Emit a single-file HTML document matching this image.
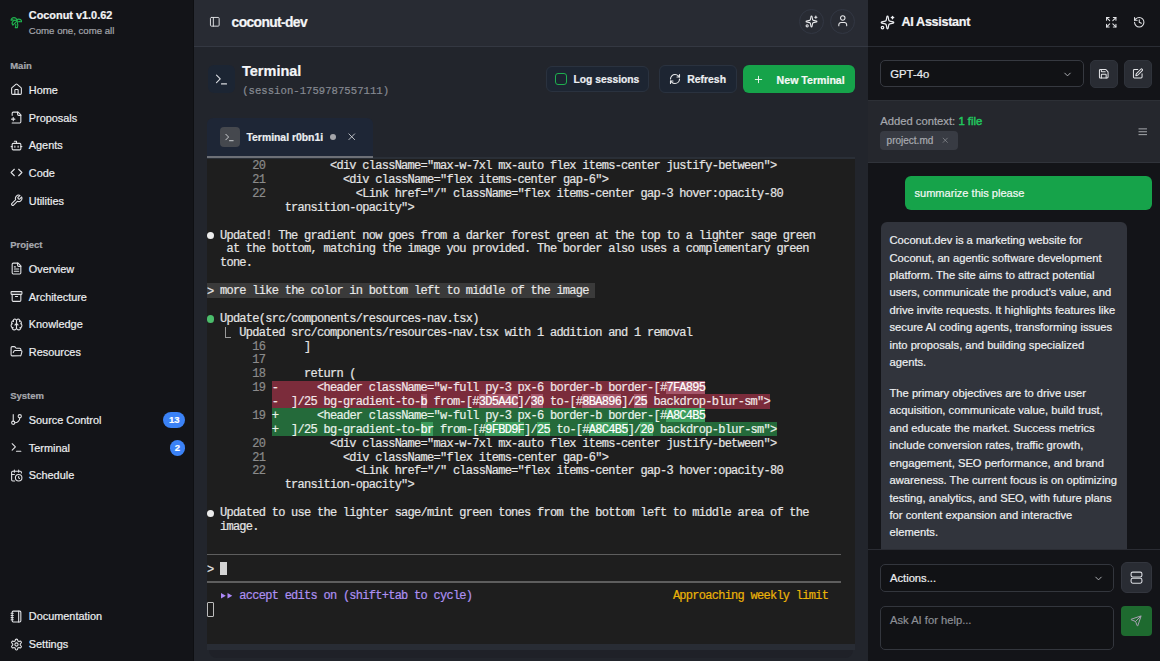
<!DOCTYPE html>
<html><head><meta charset="utf-8">
<style>
*{box-sizing:border-box;margin:0;padding:0}
html,body{width:1160px;height:661px;overflow:hidden;background:#141519;font-family:"Liberation Sans",sans-serif;color:#e8e9eb}
.a,.nl,.sl,.tr{-webkit-text-stroke:0.2px currentColor}
.a{position:absolute}
svg.i{position:absolute;fill:none;stroke:currentColor;stroke-linecap:round;stroke-linejoin:round}
#side{left:0;top:0;width:194px;height:661px;background:#131418;border-right:1px solid #0e0f12}
.nl{position:absolute;left:28.8px;font-size:10.9px;line-height:14px;height:14px;color:#eceef0;white-space:nowrap}
.sl{position:absolute;left:10.2px;font-size:9.5px;font-weight:bold;line-height:12px;height:12px;color:#a6a8ae;margin-top:0.6px}
.ni{color:#e2e3e6}
.badge{position:absolute;background:#3b82f6;color:#fff;font-weight:bold;font-size:9.5px;text-align:center;line-height:16px;height:16px;border-radius:8px}
#main{left:194px;top:0;width:674px;height:661px;background:#22252c}
#mhead{left:194px;top:0;width:674px;height:47px;background:#282b33;border-bottom:1px solid #343842}
#right{left:868px;top:0;width:292px;height:661px;background:#131418}
.tr{position:absolute;left:0;height:13.87px;line-height:13.87px;white-space:pre;font-family:"Liberation Mono",monospace;font-size:12px;letter-spacing:-0.731px;color:#e4e4e4}
.ln{color:#8b8b8b}
.gt{position:relative;top:1.2px}
.usr{color:#e6e6e6}
.rd{color:#f2e6e8}
.rh{color:#fff}
.gd{color:#e8f2ea}
.gh{color:#fff}
.pu{color:#ad90f2}
.ye{color:#eab308}
.chat{font-size:11.2px;line-height:17.43px;color:#eef0f2;white-space:nowrap}
</style></head><body>
<!-- SIDEBAR -->
<div id="side" class="a">
  <svg class="i" style="left:9.7px;top:15.9px;width:12.7px;height:12.7px;color:#20b24e" viewBox="0 0 24 24" stroke-width="2.1"><path d="M13 8c0-2.760-2.460-5-5.500-5S2 5.240 2 8h2l1-1 1 1h4"/><path d="M13 7.140A5.820 5.820 0 0 1 16.500 6c3.040 0 5.500 2.240 5.500 5h-3l-1-1-1 1h-3"/><path d="M5.890 9.710c-2.150 2.150-2.300 5.470-.350 7.430l4.240-4.250.700-.700.710-.710 2.120-2.120c-1.950-1.960-5.270-1.800-7.420.350"/><path d="M11 15.500c.500 2.500-.170 4.500-1 6.500h4c2-5.500-.500-12-1-14"/></svg>
  <div class="a" style="left:28.8px;top:8px;font-size:10.9px;font-weight:bold;line-height:14px;color:#f3f4f6;white-space:nowrap">Coconut v1.0.62</div>
  <div class="a" style="left:28.8px;top:23.7px;font-size:9.65px;line-height:13px;color:#a4a6ac;white-space:nowrap">Come one, come all</div>

  <div class="sl" style="top:59.7px">Main</div>
  <svg class="i ni" style="left:9.8px;top:83.25px;width:13px;height:13px" viewBox="0 0 24 24" stroke-width="2"><path d="M15 21v-8a1 1 0 0 0-1-1h-4a1 1 0 0 0-1 1v8"/><path d="M3 10a2 2 0 0 1 .709-1.528l7-5.999a2 2 0 0 1 2.582 0l7 5.999A2 2 0 0 1 21 10v9a2 2 0 0 1-2 2H5a2 2 0 0 1-2-2z"/></svg>
  <div class="nl" style="top:83px">Home</div>
  <svg class="i ni" style="left:9.8px;top:110.95px;width:13px;height:13px" viewBox="0 0 24 24" stroke-width="2"><path d="M4 22h14a2 2 0 0 0 2-2V7l-5-5H6a2 2 0 0 0-2 2v4"/><path d="M14 2v4a2 2 0 0 0 2 2h4"/><path d="M3 15h6"/><path d="M6 12v6"/></svg>
  <div class="nl" style="top:110.7px">Proposals</div>
  <svg class="i ni" style="left:9.8px;top:138.65px;width:13px;height:13px" viewBox="0 0 24 24" stroke-width="2"><path d="M12 8V4H8"/><rect width="16" height="12" x="4" y="8" rx="2"/><path d="M2 14h2"/><path d="M20 14h2"/><path d="M15 13v2"/><path d="M9 13v2"/></svg>
  <div class="nl" style="top:138.4px">Agents</div>
  <svg class="i ni" style="left:9.8px;top:166.35px;width:13px;height:13px" viewBox="0 0 24 24" stroke-width="2"><polyline points="16 18 22 12 16 6"/><polyline points="8 6 2 12 8 18"/></svg>
  <div class="nl" style="top:166.1px">Code</div>
  <svg class="i ni" style="left:9.8px;top:194.05px;width:13px;height:13px" viewBox="0 0 24 24" stroke-width="2"><path d="M14.7 6.3a1 1 0 0 0 0 1.4l1.6 1.6a1 1 0 0 0 1.4 0l3.77-3.77a6 6 0 0 1-7.94 7.94l-6.91 6.91a2.12 2.12 0 0 1-3-3l6.910-6.910a6 6 0 0 1 7.940-7.940l-3.760 3.760z"/></svg>
  <div class="nl" style="top:193.8px">Utilities</div>

  <div class="sl" style="top:238.6px">Project</div>
  <svg class="i ni" style="left:9.8px;top:262.25px;width:13px;height:13px" viewBox="0 0 24 24" stroke-width="2"><path d="M15 2H6a2 2 0 0 0-2 2v16a2 2 0 0 0 2 2h12a2 2 0 0 0 2-2V7Z"/><path d="M14 2v4a2 2 0 0 0 2 2h4"/><path d="M10 9H8"/><path d="M16 13H8"/><path d="M16 17H8"/></svg>
  <div class="nl" style="top:261.8px">Overview</div>
  <svg class="i ni" style="left:9.8px;top:289.95px;width:13px;height:13px" viewBox="0 0 24 24" stroke-width="2"><rect width="20" height="5" x="2" y="3" rx="1"/><path d="M4 8v11a2 2 0 0 0 2 2h12a2 2 0 0 0 2-2V8"/><path d="M10 12h4"/></svg>
  <div class="nl" style="top:289.5px">Architecture</div>
  <svg class="i ni" style="left:9.8px;top:317.65px;width:13px;height:13px" viewBox="0 0 24 24" stroke-width="2"><path d="M12 5a3 3 0 1 0-5.997.125 4 4 0 0 0-2.526 5.77 4 4 0 0 0 .556 6.588A4 4 0 1 0 12 18Z"/><path d="M12 5a3 3 0 1 1 5.997.125 4 4 0 0 1 2.526 5.77 4 4 0 0 1-.556 6.588A4 4 0 1 1 12 18Z"/><path d="M15 13a4.5 4.5 0 0 1-3-4 4.5 4.5 0 0 1-3 4"/><path d="M17.599 6.5a3 3 0 0 0 .399-1.375"/><path d="M6.003 5.125A3 3 0 0 0 6.401 6.5"/><path d="M3.477 10.896a4 4 0 0 1 .585-.396"/><path d="M19.938 10.5a4 4 0 0 1 .585.396"/><path d="M6 18a4 4 0 0 1-1.967-.516"/><path d="M19.967 17.484A4 4 0 0 1 18 18"/></svg>
  <div class="nl" style="top:317.2px">Knowledge</div>
  <svg class="i ni" style="left:9.8px;top:345.35px;width:13px;height:13px" viewBox="0 0 24 24" stroke-width="2"><path d="m6 14 1.5-2.9A2 2 0 0 1 9.24 10H20a2 2 0 0 1 1.94 2.5l-1.54 6a2 2 0 0 1-1.95 1.5H4a2 2 0 0 1-2-2V5a2 2 0 0 1 2-2h3.9a2 2 0 0 1 1.69.9l.81 1.2a2 2 0 0 0 1.67.9H18a2 2 0 0 1 2 2v2"/></svg>
  <div class="nl" style="top:344.9px">Resources</div>

  <div class="sl" style="top:389.4px">System</div>
  <svg class="i ni" style="left:9.8px;top:413.45px;width:13px;height:13px" viewBox="0 0 24 24" stroke-width="2"><line x1="6" x2="6" y1="3" y2="15"/><circle cx="18" cy="6" r="3"/><circle cx="6" cy="18" r="3"/><path d="M18 9a9 9 0 0 1-9 9"/></svg>
  <div class="nl" style="top:413px">Source Control</div>
  <div class="badge" style="left:163.2px;top:412px;width:22px">13</div>
  <svg class="i ni" style="left:9.8px;top:441.15px;width:13px;height:13px" viewBox="0 0 24 24" stroke-width="2"><polyline points="4 17 10 11 4 5"/><line x1="12" x2="20" y1="19" y2="19"/></svg>
  <div class="nl" style="top:440.7px">Terminal</div>
  <div class="badge" style="left:169.5px;top:440px;width:15.6px;height:15.6px;line-height:15.6px">2</div>
  <svg class="i ni" style="left:9.8px;top:468.85px;width:13px;height:13px" viewBox="0 0 24 24" stroke-width="2"><path d="M21 7.5V6a2 2 0 0 0-2-2H5a2 2 0 0 0-2 2v14a2 2 0 0 0 2 2h3.5"/><path d="M16 2v4"/><path d="M8 2v4"/><path d="M3 10h5"/><path d="M17.5 17.5 16 16.3V14"/><circle cx="16" cy="16" r="6"/></svg>
  <div class="nl" style="top:468.4px">Schedule</div>

  <svg class="i ni" style="left:9.8px;top:609.85px;width:13px;height:13px" viewBox="0 0 24 24" stroke-width="2"><path d="M2 6h4"/><path d="M2 10h4"/><path d="M2 14h4"/><path d="M2 18h4"/><rect width="16" height="20" x="4" y="2" rx="2"/><path d="M16 2v20"/></svg>
  <div class="nl" style="top:609.4px">Documentation</div>
  <svg class="i ni" style="left:9.8px;top:637.85px;width:13px;height:13px" viewBox="0 0 24 24" stroke-width="2"><path d="M12.22 2h-.44a2 2 0 0 0-2 2v.18a2 2 0 0 1-1 1.73l-.43.25a2 2 0 0 1-2 0l-.15-.08a2 2 0 0 0-2.73.73l-.22.38a2 2 0 0 0 .73 2.73l.15.1a2 2 0 0 1 1 1.72v.51a2 2 0 0 1-1 1.74l-.15.09a2 2 0 0 0-.73 2.73l.22.38a2 2 0 0 0 2.73.73l.15-.08a2 2 0 0 1 2 0l.43.25a2 2 0 0 1 1 1.73V20a2 2 0 0 0 2 2h.44a2 2 0 0 0 2-2v-.18a2 2 0 0 1 1-1.73l.43-.25a2 2 0 0 1 2 0l.15.08a2 2 0 0 0 2.73-.73l.22-.39a2 2 0 0 0-.73-2.730l-.15-.08a2 2 0 0 1-1-1.740v-.5a2 2 0 0 1 1-1.740l.15-.09a2 2 0 0 0 .73-2.730l-.22-.38a2 2 0 0 0-2.730-.73l-.15.08a2 2 0 0 1-2 0l-.43-.25a2 2 0 0 1-1-1.730V4a2 2 0 0 0-2-2z"/><circle cx="12" cy="12" r="3"/></svg>
  <div class="nl" style="top:637.4px">Settings</div>
</div>

<!-- MAIN -->
<div id="main" class="a"></div>
<div id="mhead" class="a"></div>
<svg class="i" style="left:209.2px;top:16.2px;width:11.6px;height:11.6px;color:#dfe0e3" viewBox="0 0 24 24" stroke-width="2"><rect width="18" height="18" x="3" y="3" rx="2"/><path d="M9 3v18"/></svg>
<div class="a" style="left:231.6px;top:15.4px;font-size:13.8px;letter-spacing:-0.6px;font-weight:bold;line-height:16px;color:#f4f5f7;white-space:nowrap">coconut-dev</div>
<div class="a" style="left:799px;top:9px;width:25px;height:25px;border-radius:50%;border:1px solid #323743"></div>
<svg class="i" style="left:805px;top:15.2px;width:13px;height:13px;color:#e8e9eb" viewBox="0 0 24 24" stroke-width="2"><path d="M11.017 2.814a1 1 0 0 1 1.966 0l1.051 5.558a2 2 0 0 0 1.594 1.594l5.558 1.051a1 1 0 0 1 0 1.966l-5.558 1.051a2 2 0 0 0-1.594 1.594l-1.051 5.558a1 1 0 0 1-1.966 0l-1.051-5.558a2 2 0 0 0-1.594-1.594l-5.558-1.051a1 1 0 0 1 0-1.966l5.558-1.051a2 2 0 0 0 1.594-1.594z"/><path d="M20 2v4"/><path d="M22 4h-4"/><circle cx="4" cy="20" r="2"/></svg>
<div class="a" style="left:830px;top:9px;width:25px;height:25px;border-radius:50%;border:1px solid #323743"></div>
<svg class="i" style="left:835.9px;top:13.9px;width:13.5px;height:13.5px;color:#e8e9eb" viewBox="0 0 24 24" stroke-width="1.9"><path d="M19 21v-2a4 4 0 0 0-4-4H9a4 4 0 0 0-4 4v2"/><circle cx="12" cy="7" r="4"/></svg>

<div class="a" style="left:207.5px;top:65.3px;width:27.5px;height:27.5px;border-radius:6px;background:#1c2533"></div>
<svg class="i" style="left:213.6px;top:71.6px;width:15px;height:15px;color:#d9dbe0" viewBox="0 0 24 24" stroke-width="1.8"><polyline points="4 17 10 11 4 5"/><line x1="12" x2="20" y1="19" y2="19"/></svg>
<div class="a" style="left:242px;top:61.5px;font-size:14.5px;font-weight:bold;line-height:18px;color:#f4f5f7;white-space:nowrap">Terminal</div>
<div class="a" style="left:242.2px;top:83.5px;font-family:'Liberation Mono',monospace;font-size:10.65px;line-height:14px;color:#868a92;white-space:nowrap">(session-1759787557111)</div>

<div class="a" style="left:545.5px;top:66px;width:103.5px;height:26.4px;border-radius:6px;background:#1d2532;border:1px solid #2a323f"></div>
<div class="a" style="left:555px;top:73.2px;width:12.2px;height:12.2px;border-radius:3px;border:1px solid #1fae4f;background:#1b2430"></div>
<div class="a" style="left:573.5px;top:73px;font-size:10.3px;font-weight:bold;line-height:14px;color:#eceef1;white-space:nowrap">Log sessions</div>
<div class="a" style="left:658.6px;top:65.3px;width:78px;height:27.5px;border-radius:6px;background:#1d2532;border:1px solid #2a323f"></div>
<svg class="i" style="left:668.9px;top:73.4px;width:12px;height:12px;color:#e8e9eb" viewBox="0 0 24 24" stroke-width="2.2"><path d="M3 12a9 9 0 0 1 9-9 9.75 9.75 0 0 1 6.74 2.74L21 8"/><path d="M21 3v5h-5"/><path d="M21 12a9 9 0 0 1-9 9 9.75 9.75 0 0 1-6.74-2.74L3 16"/><path d="M8 16H3v5"/></svg>
<div class="a" style="left:687.3px;top:73px;font-size:10.4px;font-weight:bold;line-height:14px;color:#eceef1;white-space:nowrap">Refresh</div>
<div class="a" style="left:742.7px;top:65.3px;width:112px;height:27.5px;border-radius:6px;background:#16a34a"></div>
<svg class="i" style="left:752.6px;top:73.6px;width:11px;height:11px;color:#f2f7f3" viewBox="0 0 24 24" stroke-width="2"><path d="M5 12h14"/><path d="M12 5v14"/></svg>
<div class="a" style="left:776.6px;top:73px;font-size:10.6px;font-weight:bold;line-height:14px;color:#f4f8f5;white-space:nowrap">New Terminal</div>

<div class="a" style="left:207.4px;top:117.8px;width:165.6px;height:40px;border-radius:6px 6px 0 0;background:#1e2636"></div>
<div class="a" style="left:207px;top:157.3px;width:648px;height:1.7px;background:#2a2f37"></div>
<div class="a" style="left:207.4px;top:156px;width:165.6px;height:2px;background:#6d7077"></div>
<div class="a" style="left:219.9px;top:127px;width:19.7px;height:20px;border-radius:4px;background:#45484e"></div>
<svg class="i" style="left:224.2px;top:131.6px;width:11px;height:11px;color:#dfe1e4" viewBox="0 0 24 24" stroke-width="1.9"><polyline points="4 17 10 11 4 5"/><line x1="12" x2="20" y1="19" y2="19"/></svg>
<div class="a" style="left:246.5px;top:131px;font-size:10.4px;font-weight:bold;line-height:14px;color:#eceef1;white-space:nowrap">Terminal r0bn1i</div>
<div class="a" style="left:329.6px;top:133.7px;width:6.6px;height:6.6px;border-radius:50%;background:#a4a5aa"></div>
<svg class="i" style="left:345.6px;top:131.4px;width:11.5px;height:11.5px;color:#d5d7db" viewBox="0 0 24 24" stroke-width="1.8"><path d="M18 6 6 18"/><path d="m6 6 12 12"/></svg>

<div class="a" style="left:207px;top:159px;width:648px;height:484.7px;background:#1e1e1e"></div>
<div class="a" style="left:207px;top:643.7px;width:648px;height:6.3px;background:#282c34"></div>
<div class="a" style="left:209px;top:650px;width:644px;height:7.5px;background:#1f2128;border-radius:0 0 10px 10px"></div>
<div id="term" class="a" style="left:207px;top:158.5px;width:648px;height:484px;overflow:hidden">
<div class="tr" style="top:1.6px">       <span class="ln">20</span>          &lt;div className="max-w-7xl mx-auto flex items-center justify-between"&gt;</div>
<div class="tr" style="top:15.48px">       <span class="ln">21</span>            &lt;div className="flex items-center gap-6"&gt;</div>
<div class="tr" style="top:29.36px">       <span class="ln">22</span>              &lt;Link href="/" className="flex items-center gap-3 hover:opacity-80</div>
<div class="tr" style="top:43.24px">            transition-opacity"&gt;</div>
<div class="tr" style="top:71.0px">  Updated! The gradient now goes from a darker forest green at the top to a lighter sage green</div>
<div class="tr" style="top:84.88px">   at the bottom, matching the image you provided. The border also uses a complementary green</div>
<div class="tr" style="top:98.76px">  tone.</div>
<div class="a" style="left:0.0px;top:124.92px;width:6.77px;height:14.180000000000001px;background:#3a3a3a"></div>
<div class="a" style="left:6.47px;top:124.92px;width:382.03px;height:14.180000000000001px;background:#3a3a3a"></div>
<div class="tr" style="top:126.52px"><span class="gt usr">&gt;</span><span class="usr"> more like the color in bottom left to middle of the image </span></div>
<div class="tr" style="top:154.28px">  Update(src/components/resources-nav.tsx)</div>
<div class="tr" style="top:168.16px">     Updated src/components/resources-nav.tsx with 1 addition and 1 removal</div>
<div class="tr" style="top:182.04px">       <span class="ln">16</span>      ]</div>
<div class="tr" style="top:195.92px">       <span class="ln">17</span></div>
<div class="tr" style="top:209.8px">       <span class="ln">18</span>      return (</div>
<div class="a" style="left:64.7px;top:222.08px;width:394.97px;height:14.180000000000001px;background:#7b2c3b"></div>
<div class="a" style="left:459.37px;top:222.08px;width:39.12px;height:14.180000000000001px;background:#a5566a"></div>
<div class="tr" style="top:223.68px">       <span class="ln">19</span> <span class="rd">-      &lt;header className="w-full py-3 px-6 border-b border-[#</span><span class="rh">7FA895</span></div>
<div class="a" style="left:64.7px;top:235.96px;width:149.11px;height:14.180000000000001px;background:#7b2c3b"></div>
<div class="a" style="left:213.51px;top:235.96px;width:6.77px;height:14.180000000000001px;background:#a5566a"></div>
<div class="a" style="left:219.98px;top:235.96px;width:52.06px;height:14.180000000000001px;background:#7b2c3b"></div>
<div class="a" style="left:271.74px;top:235.96px;width:39.12px;height:14.180000000000001px;background:#a5566a"></div>
<div class="a" style="left:310.56px;top:235.96px;width:13.24px;height:14.180000000000001px;background:#7b2c3b"></div>
<div class="a" style="left:323.5px;top:235.96px;width:13.24px;height:14.180000000000001px;background:#a5566a"></div>
<div class="a" style="left:336.44px;top:235.96px;width:39.12px;height:14.180000000000001px;background:#7b2c3b"></div>
<div class="a" style="left:375.26px;top:235.96px;width:39.12px;height:14.180000000000001px;background:#a5566a"></div>
<div class="a" style="left:414.08px;top:235.96px;width:13.24px;height:14.180000000000001px;background:#7b2c3b"></div>
<div class="a" style="left:427.02px;top:235.96px;width:13.24px;height:14.180000000000001px;background:#a5566a"></div>
<div class="a" style="left:439.96px;top:235.96px;width:123.23px;height:14.180000000000001px;background:#7b2c3b"></div>
<div class="tr" style="top:237.56px">          <span class="rd">-  ]/25 bg-gradient-to-</span><span class="rh">b</span><span class="rd"> from-[#</span><span class="rh">3D5A4C</span><span class="rd">]/</span><span class="rh">30</span><span class="rd"> to-[#</span><span class="rh">8BA896</span><span class="rd">]/</span><span class="rh">25</span><span class="rd"> backdrop-blur-sm"&gt;</span></div>
<div class="a" style="left:64.7px;top:249.84px;width:394.97px;height:14.180000000000001px;background:#246a3a"></div>
<div class="a" style="left:459.37px;top:249.84px;width:39.12px;height:14.180000000000001px;background:#3c9d5d"></div>
<div class="tr" style="top:251.44px">       <span class="ln">19</span> <span class="gd">+      &lt;header className="w-full py-3 px-6 border-b border-[#</span><span class="gh">A8C4B5</span></div>
<div class="a" style="left:64.7px;top:263.72px;width:149.11px;height:14.180000000000001px;background:#246a3a"></div>
<div class="a" style="left:213.51px;top:263.72px;width:13.24px;height:14.180000000000001px;background:#3c9d5d"></div>
<div class="a" style="left:226.45px;top:263.72px;width:52.06px;height:14.180000000000001px;background:#246a3a"></div>
<div class="a" style="left:278.21px;top:263.72px;width:39.12px;height:14.180000000000001px;background:#3c9d5d"></div>
<div class="a" style="left:317.03px;top:263.72px;width:13.24px;height:14.180000000000001px;background:#246a3a"></div>
<div class="a" style="left:329.97px;top:263.72px;width:13.24px;height:14.180000000000001px;background:#3c9d5d"></div>
<div class="a" style="left:342.91px;top:263.72px;width:39.12px;height:14.180000000000001px;background:#246a3a"></div>
<div class="a" style="left:381.73px;top:263.72px;width:39.12px;height:14.180000000000001px;background:#3c9d5d"></div>
<div class="a" style="left:420.55px;top:263.72px;width:13.24px;height:14.180000000000001px;background:#246a3a"></div>
<div class="a" style="left:433.49px;top:263.72px;width:13.24px;height:14.180000000000001px;background:#3c9d5d"></div>
<div class="a" style="left:446.43px;top:263.72px;width:123.23px;height:14.180000000000001px;background:#246a3a"></div>
<div class="tr" style="top:265.32px">          <span class="gd">+  ]/25 bg-gradient-to-</span><span class="gh">br</span><span class="gd"> from-[#</span><span class="gh">9FBD9F</span><span class="gd">]/</span><span class="gh">25</span><span class="gd"> to-[#</span><span class="gh">A8C4B5</span><span class="gd">]/</span><span class="gh">20</span><span class="gd"> backdrop-blur-sm"&gt;</span></div>
<div class="tr" style="top:279.2px">       <span class="ln">20</span>          &lt;div className="max-w-7xl mx-auto flex items-center justify-between"&gt;</div>
<div class="tr" style="top:293.08px">       <span class="ln">21</span>            &lt;div className="flex items-center gap-6"&gt;</div>
<div class="tr" style="top:306.96px">       <span class="ln">22</span>              &lt;Link href="/" className="flex items-center gap-3 hover:opacity-80</div>
<div class="tr" style="top:320.84px">            transition-opacity"&gt;</div>
<div class="tr" style="top:348.6px">  Updated to use the lighter sage/mint green tones from the bottom left to middle area of the</div>
<div class="tr" style="top:362.48px">  image.</div>
<div class="tr" style="top:404.12px"><span class="gt">&gt;</span> </div>
<div class="tr" style="top:431.88px">    <span class="pu"> accept edits on (shift+tab to cycle)</span>                               <span class="ye">Approaching weekly limit</span></div>
<div class="a" style="left:-0.1px;top:73.7px;width:7.3px;height:7.3px;border-radius:50%;background:#ececec"></div>
<div class="a" style="left:-0.1px;top:156.98px;width:7.3px;height:7.3px;border-radius:50%;background:#4bbd6b"></div>
<div class="a" style="left:-0.1px;top:351.3px;width:7.3px;height:7.3px;border-radius:50%;background:#ececec"></div>
<div class="a" style="left:18.2px;top:168.26px;width:5.7px;height:10.9px;border-left:1.2px solid #9a9a9a;border-bottom:1.2px solid #9a9a9a"></div>
<div class="a" style="left:0;top:395.04px;width:634px;height:1.7px;background:#5e5e5e"></div>
<div class="a" style="left:0;top:422.9px;width:634px;height:1.7px;background:#5e5e5e"></div>
<div class="a" style="left:13px;top:403.02px;width:6.9px;height:13.7px;background:#d4d4d4"></div>
<div class="a" style="left:0;top:443.56px;width:7px;height:14.8px;border:1.1px solid #bdbdbd;border-radius:1px"></div>
<svg class="a" style="left:13.6px;top:434.68px;width:12px;height:6px" viewBox="0 0 12 6"><path d="M0 0 L4.8 2.75 L0 5.5Z M6.5 0 L11.3 2.75 L6.5 5.5Z" fill="#ad88f7"/></svg>
<!--ENDTERM-->
</div>

<!-- RIGHT -->
<div id="right" class="a"></div>
<div class="a" style="left:868px;top:46px;width:292px;height:1px;background:#2a2d34"></div>
<svg class="i" style="left:880.3px;top:14.6px;width:15px;height:15px;color:#eceef1" viewBox="0 0 24 24" stroke-width="2"><path d="M11.017 2.814a1 1 0 0 1 1.966 0l1.051 5.558a2 2 0 0 0 1.594 1.594l5.558 1.051a1 1 0 0 1 0 1.966l-5.558 1.051a2 2 0 0 0-1.594 1.594l-1.051 5.558a1 1 0 0 1-1.966 0l-1.051-5.558a2 2 0 0 0-1.594-1.594l-5.558-1.051a1 1 0 0 1 0-1.966l5.558-1.051a2 2 0 0 0 1.594-1.594z"/><path d="M20 2v4"/><path d="M22 4h-4"/><circle cx="4" cy="20" r="2"/></svg>
<div class="a" style="left:901.4px;top:14px;font-size:12.6px;letter-spacing:-0.3px;font-weight:bold;line-height:16px;color:#f4f5f7;white-space:nowrap">AI Assistant</div>
<svg class="i" style="left:1105.2px;top:16px;width:12.5px;height:12.5px;color:#e4e5e8" viewBox="0 0 24 24" stroke-width="2"><path d="m15 15 6 6"/><path d="m15 9 6-6"/><path d="M21 16v5h-5"/><path d="M21 8V3h-5"/><path d="M3 16v5h5"/><path d="m3 21 6-6"/><path d="M3 8V3h5"/><path d="M9 9 3 3"/></svg>
<svg class="i" style="left:1132.7px;top:16px;width:12.5px;height:12.5px;color:#e4e5e8" viewBox="0 0 24 24" stroke-width="2"><path d="M3 12a9 9 0 1 0 9-9 9.75 9.75 0 0 0-6.74 2.74L3 8"/><path d="M3 3v5h5"/><path d="M12 7v5l4 2"/></svg>

<div class="a" style="left:880.2px;top:60px;width:203.5px;height:27.4px;border-radius:5px;border:1px solid #363940;background:#111215"></div>
<div class="a" style="left:890.3px;top:67.2px;font-size:11.3px;line-height:14px;color:#eceef1;white-space:nowrap">GPT-4o</div>
<svg class="i" style="left:1061.6px;top:68.6px;width:11px;height:11px;color:#b9bbc0" viewBox="0 0 24 24" stroke-width="2"><path d="m6 9 6 6 6-6"/></svg>
<div class="a" style="left:1090.2px;top:59.8px;width:27.6px;height:28.1px;border-radius:5px;background:#292c33;border:1px solid #2f333b"></div>
<svg class="i" style="left:1098.2px;top:68px;width:11.5px;height:11.5px;color:#e4e5e8" viewBox="0 0 24 24" stroke-width="2.1"><path d="M15.2 3a2 2 0 0 1 1.4.6l3.8 3.8a2 2 0 0 1 .6 1.4V19a2 2 0 0 1-2 2H5a2 2 0 0 1-2-2V5a2 2 0 0 1 2-2z"/><path d="M17 21v-7a1 1 0 0 0-1-1H8a1 1 0 0 0-1 1v7"/><path d="M7 3v4a1 1 0 0 0 1 1h7"/></svg>
<div class="a" style="left:1123.8px;top:59.8px;width:27.9px;height:28.1px;border-radius:5px;background:#292c33;border:1px solid #2f333b"></div>
<svg class="i" style="left:1131.9px;top:68px;width:11.5px;height:11.5px;color:#e4e5e8" viewBox="0 0 24 24" stroke-width="2.1"><path d="M12 3H5a2 2 0 0 0-2 2v14a2 2 0 0 0 2 2h14a2 2 0 0 0 2-2v-7"/><path d="M18.375 2.625a1 1 0 0 1 3 3l-9.013 9.014a2 2 0 0 1-.853.505l-2.873.84a.5.5 0 0 1-.62-.62l.84-2.873a2 2 0 0 1 .506-.852z"/></svg>

<div class="a" style="left:868px;top:99.5px;width:292px;height:63px;background:#25272d;border-top:1px solid #2d3036;border-bottom:1px solid #30333a"></div>
<div class="a" style="left:880.2px;top:113.8px;font-size:11.26px;line-height:14px;color:#a6a8ae;white-space:nowrap">Added context: <span style="color:#22c55e;-webkit-text-stroke:0.5px #22c55e">1 file</span></div>
<div class="a" style="left:880.2px;top:131.4px;width:77.5px;height:18.6px;border-radius:4px;background:#383b43"></div>
<div class="a" style="left:886.6px;top:133.7px;font-size:10px;line-height:14px;color:#a9abb1;white-space:nowrap">project.md</div>
<svg class="i" style="left:941.3px;top:136.3px;width:8.5px;height:8.5px;color:#8d9096" viewBox="0 0 24 24" stroke-width="2"><path d="M18 6 6 18"/><path d="m6 6 12 12"/></svg>
<svg class="i" style="left:1136.5px;top:126px;width:11.5px;height:11.5px;color:#b3b5ba" viewBox="0 0 24 24" stroke-width="1.9"><line x1="4" x2="20" y1="12" y2="12"/><line x1="4" x2="20" y1="6" y2="6"/><line x1="4" x2="20" y1="18" y2="18"/></svg>

<div class="a" style="left:905px;top:175.5px;width:246.7px;height:34px;border-radius:6px;background:#16a34a"></div>
<div class="a" style="left:914.5px;top:185.5px;font-size:11.06px;line-height:14px;color:#f4f8f5;white-space:nowrap">summarize this please</div>
<div class="a" style="left:880.5px;top:222px;width:246.2px;height:340px;border-radius:6px;background:#31343c"></div>
<div class="a chat" style="left:889.5px;top:232.1px">
<div>Coconut.dev is a marketing website for</div>
<div>Coconut, an agentic software development</div>
<div>platform. The site aims to attract potential</div>
<div>users, communicate the product's value, and</div>
<div>drive invite requests. It highlights features like</div>
<div>secure AI coding agents, transforming issues</div>
<div>into proposals, and building specialized</div>
<div>agents.</div>
<div style="margin-top:13.3px">The primary objectives are to drive user</div>
<div>acquisition, communicate value, build trust,</div>
<div>and educate the market. Success metrics</div>
<div>include conversion rates, traffic growth,</div>
<div>engagement, SEO performance, and brand</div>
<div>awareness. The current focus is on optimizing</div>
<div>testing, analytics, and SEO, with future plans</div>
<div>for content expansion and interactive</div>
<div>elements.</div>
</div>
<div class="a" style="left:868px;top:549px;width:292px;height:112px;background:#131418;border-top:1px solid #2a2c33"></div>
<div class="a" style="left:880px;top:564.2px;width:234.2px;height:27.7px;border-radius:5px;border:1px solid #33363d;background:#111215"></div>
<div class="a" style="left:890px;top:571px;font-size:11.2px;line-height:14px;color:#eceef1;white-space:nowrap">Actions...</div>
<svg class="i" style="left:1092.8px;top:572.5px;width:11px;height:11px;color:#b9bbc0" viewBox="0 0 24 24" stroke-width="2"><path d="m6 9 6 6 6-6"/></svg>
<div class="a" style="left:1120.5px;top:562.4px;width:31.2px;height:30.7px;border-radius:6px;background:#292c33;border:1px solid #33363e"></div>
<svg class="i" style="left:1129.6px;top:571.3px;width:13px;height:13px;color:#d9dbe0" viewBox="0 0 24 24" stroke-width="2"><rect width="20" height="9" x="2" y="2" rx="3" ry="3"/><rect width="20" height="9" x="2" y="13.5" rx="3" ry="3"/></svg>
<div class="a" style="left:880px;top:605.7px;width:234.2px;height:44.6px;border-radius:5px;border:1px solid #33363d;background:#111215"></div>
<div class="a" style="left:890px;top:612.6px;font-size:11.2px;line-height:14px;color:#8c8f95;white-space:nowrap">Ask AI for help...</div>
<div class="a" style="left:1121px;top:605.7px;width:30.7px;height:30.2px;border-radius:4px;background:#1e6a2f"></div>
<svg class="i" style="left:1130.4px;top:614.8px;width:12px;height:12px;color:#a59fb0" viewBox="0 0 24 24" stroke-width="2"><path d="M14.536 21.686a.5.5 0 0 0 .937-.024l6.5-19a.496.496 0 0 0-.635-.635l-19 6.5a.5.5 0 0 0-.024.937l7.93 3.18a2 2 0 0 1 1.112 1.11z"/><path d="m21.854 2.147-10.94 10.939"/></svg>
</body></html>
